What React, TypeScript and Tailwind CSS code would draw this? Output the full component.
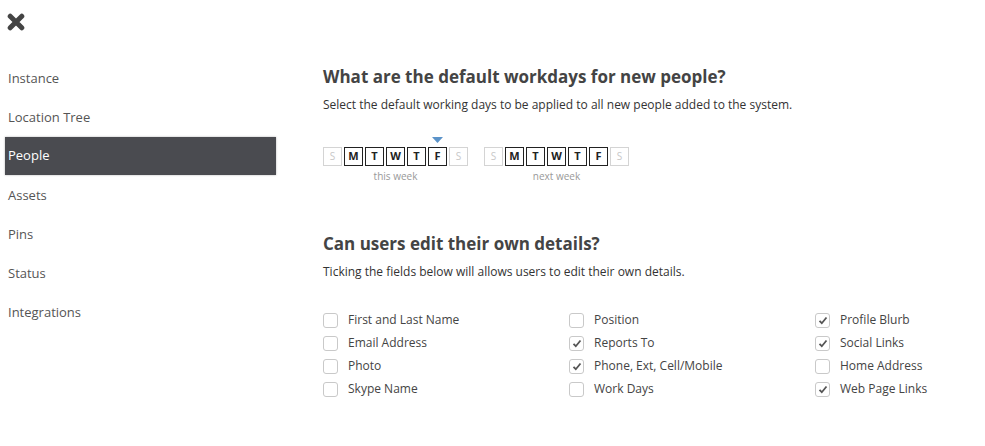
import { Fragment } from "react";

type Day = { label: string; on: boolean };

const WEEK: Day[] = [
  { label: "S", on: false },
  { label: "M", on: true },
  { label: "T", on: true },
  { label: "W", on: true },
  { label: "T", on: true },
  { label: "F", on: true },
  { label: "S", on: false },
];

const NAV = ["Instance", "Location Tree", "People", "Assets", "Pins", "Status", "Integrations"];

const FIELDS: { label: string; checked: boolean }[][] = [
  [
    { label: "First and Last Name", checked: false },
    { label: "Email Address", checked: false },
    { label: "Photo", checked: false },
    { label: "Skype Name", checked: false },
  ],
  [
    { label: "Position", checked: false },
    { label: "Reports To", checked: true },
    { label: "Phone, Ext, Cell/Mobile", checked: true },
    { label: "Work Days", checked: false },
  ],
  [
    { label: "Profile Blurb", checked: true },
    { label: "Social Links", checked: true },
    { label: "Home Address", checked: false },
    { label: "Web Page Links", checked: true },
  ],
];

function CloseIcon() {
  return (
    <svg width="18" height="18" viewBox="0 0 18 18" aria-hidden>
      <path d="M3.2 3.2 L14.8 14.8 M14.8 3.2 L3.2 14.8" stroke="#444" strokeWidth="5" strokeLinecap="round" />
    </svg>
  );
}

function WeekPicker({ caption, marker }: { caption: string; marker?: number }) {
  return (
    <div className="flex flex-col">
      <div className="flex h-[10px] gap-[2px]">
        {WEEK.map((_, i) => (
          <div key={i} className="flex w-[19px] justify-center">
            {marker === i ? (
              <svg width="11" height="6" viewBox="0 0 11 6">
                <path d="M0 0 H11 L5.5 6 Z" fill="#5b93c9" />
              </svg>
            ) : null}
          </div>
        ))}
      </div>
      <div className="flex gap-[2px]">
        {WEEK.map((d, i) =>
          d.on ? (
            <div
              key={i}
              className="flex h-[19px] w-[19px] items-center justify-center border-[1.5px] border-[#222] text-[11px] font-bold text-[#222]"
            >
              {d.label}
            </div>
          ) : (
            <div
              key={i}
              className="flex h-[19px] w-[19px] items-center justify-center border border-[#d4d4d4] text-[10px] text-[#c8c8c8]"
            >
              {d.label}
            </div>
          ),
        )}
      </div>
      <div className="mt-[3px] text-center text-[10px] text-[#999]">{caption}</div>
    </div>
  );
}

function Checkbox({ checked }: { checked: boolean }) {
  return (
    <span className="flex h-[15px] w-[15px] items-center justify-center rounded-[3px] border border-[#c9c9c9] bg-white">
      {checked ? (
        <svg width="10" height="9" viewBox="0 0 10 9" aria-hidden>
          <path d="M1.5 4.8 L3.8 7.2 L8.5 1.5" stroke="#555" strokeWidth="1.8" fill="none" />
        </svg>
      ) : null}
    </span>
  );
}

export default function App() {
  return (
    <div
      className="flex h-[446px] w-[985px] bg-white text-[#444]"
      style={{ fontFamily: '"Open Sans", "Noto Sans", sans-serif' }}
    >
      <aside className="w-[276px] shrink-0 pl-[5px]">
        <div className="pl-[2px] pt-[13px]">
          <CloseIcon />
        </div>
        <nav className="mt-[28px] flex flex-col">
          {NAV.map((item) =>
            item === "People" ? (
              <div
                key={item}
                className="mb-[1px] flex h-[38px] items-center bg-[#4a4b50] pl-[3px] text-[13px] text-white shadow-[0_0_2px_rgba(0,0,0,0.3)]"
              >
                {item}
              </div>
            ) : (
              <div key={item} className="flex h-[39px] items-center pl-[3px] text-[13px] text-[#555]">
                {item}
              </div>
            ),
          )}
        </nav>
      </aside>

      <main className="ml-[47px] flex-1 pt-[65px]">
        <h1 className="text-[17px] font-bold leading-[24px] text-[#444]">
          What are the default workdays for new people?
        </h1>
        <p className="mt-[7px] text-[12px] leading-[18px] text-[#333]">
          Select the default working days to be applied to all new people added to the system.
        </p>
        <div className="mt-[23px] flex gap-[16px]">
          <WeekPicker caption="this week" marker={5} />
          <WeekPicker caption="next week" />
        </div>

        <h2 className="mt-[48px] text-[17px] font-bold leading-[24px] text-[#444]">
          Can users edit their own details?
        </h2>
        <p className="mt-[7px] text-[12px] leading-[18px] text-[#333]">
          Ticking the fields below will allows users to edit their own details.
        </p>
        <div className="mt-[30px] grid w-[620px] grid-cols-[246px_246px_1fr] gap-y-[5px]">
          {FIELDS[0].map((_, row) => (
            <Fragment key={row}>
              {FIELDS.map((col, c) => (
                <label key={c} className="flex h-[18px] items-center gap-[10px] text-[12px] text-[#444]">
                  <Checkbox checked={col[row].checked} />
                  {col[row].label}
                </label>
              ))}
            </Fragment>
          ))}
        </div>
      </main>
    </div>
  );
}
